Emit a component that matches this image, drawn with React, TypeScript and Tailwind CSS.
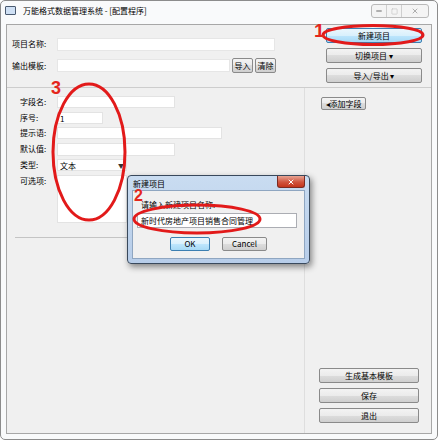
import { X, Minus, Square } from "lucide-react";

const font = "font-['Noto_Sans_CJK_SC','Noto_Sans',sans-serif]";
const btn =
  "flex items-center justify-center border border-[#8a8a8a] rounded-[2px] bg-[linear-gradient(#f3f3f3,#ebebeb_50%,#dddddd_50%,#cfcfcf)] text-[8px] leading-none text-black";
const field = "h-[12px] bg-white border border-[#e3e3e3] text-[8px] leading-[11px] px-[2px]";

function Row({ label, children }: { label: string; children: React.ReactNode }) {
  return (
    <div className="flex items-start">
      <span className="w-[37px] text-[8px] leading-[12px] text-black">{label}</span>
      {children}
    </div>
  );
}

export default function App() {
  return (
    <div className={`relative w-[438px] h-[440px] bg-white ${font}`}>
      {/* main window */}
      <div className="w-[438px] h-[440px] flex flex-col border border-[#8c8c8c] rounded-[5px] bg-[#f9fafb]">
        {/* title bar */}
        <div className="h-[23px] flex items-start shrink-0">
          <div className="mt-[5px] ml-[4px] w-[11px] h-[9px] border border-[#4a5a70] bg-[#cfe0f4] rounded-[1px]" />
          <span className="ml-[7px] mt-[4px] text-[8px] leading-[12px] text-black">
            万能格式数据管理系统 - [配置程序]
          </span>
          <div className="ml-auto mr-[8px] mt-[3px] flex h-[14px] border border-[#b9b9b9] rounded-[3px] bg-[#f4f4f4]">
            <div className="w-[15px] flex items-center justify-center border-r border-[#cfcfcf]">
              <Minus size={8} strokeWidth={3} className="text-[#6b6b6b]" />
            </div>
            <div className="w-[15px] flex items-center justify-center border-r border-[#cfcfcf]">
              <Square size={7} strokeWidth={2} className="text-[#c0c0c0]" />
            </div>
            <div className="w-[26px] flex items-center justify-center">
              <X size={8} strokeWidth={2} className="text-[#8a8a8a]" />
            </div>
          </div>
        </div>

        {/* client area */}
        <div className="mx-[5px] mb-[5px] flex-1 flex flex-col border border-[#a7a7a7] bg-[#f0f0f0]">
          {/* top section */}
          <div className="h-[63px] shrink-0 flex border-b border-[#cdcdcd]">
            <div className="flex-1 pl-[5px] pt-[12px] flex flex-col gap-[7px]">
              <div className="flex items-center h-[14px]">
                <span className="w-[45px] text-[8px] text-black">项目名称:</span>
                <div className="w-[218px] h-[13px] bg-white border border-[#e6e6e6]" />
              </div>
              <div className="flex items-center h-[15px]">
                <span className="w-[45px] text-[8px] text-black">输出模板:</span>
                <div className="w-[173px] h-[13px] bg-white border border-[#e6e6e6]" />
                <div className={`${btn} ml-[2px] w-[21px] h-[15px]`}>导入</div>
                <div className={`${btn} ml-[2px] w-[21px] h-[15px]`}>清除</div>
              </div>
            </div>
            <div className="w-[96px] mr-[9px] pt-[3px] flex flex-col gap-[5px]">
              <div className="flex items-center justify-center h-[15px] border border-[#3c7fb1] rounded-[2px] bg-[linear-gradient(#eaf6fd,#d9f0fc_50%,#bee6fd_50%,#a7d9f5)] text-[8px] leading-none">
                新建项目
              </div>
              <div className={`${btn} h-[15px]`}>切换项目 ▾</div>
              <div className={`${btn} h-[15px]`}>导入/导出 ▾</div>
            </div>
          </div>

          {/* lower section */}
          <div className="flex-1 flex">
            <div className="w-[298px] border-r border-[#dedede] flex flex-col">
              <div className="pl-[13px] pt-[8px] flex flex-col gap-[3.5px]">
                <Row label="字段名:">
                  <div className={`${field} w-[118px]`} />
                </Row>
                <Row label="序号:">
                  <div className={`${field} w-[46px]`}>1</div>
                </Row>
                <Row label="提示语:">
                  <div className={`${field} w-[165px]`} />
                </Row>
                <Row label="默认值:">
                  <div className={`${field} w-[118px] h-[13px]`} />
                </Row>
                <Row label="类型:">
                  <div className={`${field} w-[70px] flex items-center justify-between`}>
                    <span>文本</span>
                    <span className="text-[6px] text-[#333]">▼</span>
                  </div>
                </Row>
                <Row label="可选项:">
                  <div className="w-[70px] h-[48px] bg-white border border-[#e3e3e3]" />
                </Row>
              </div>
              <div className="mt-[14px] ml-[8px] mr-[5px] border-t border-[#c4c4c4]" />
            </div>

            <div className="flex-1 flex flex-col pl-[16px] pr-[12px] pt-[9px] pb-[10px]">
              <div className={`${btn} w-[45px] h-[13px]`}>◂添加字段</div>
              <div className="mt-auto flex flex-col gap-[5px] -ml-[2px]">
                <div className={`${btn} h-[15px]`}>生成基本模板</div>
                <div className={`${btn} h-[15px]`}>保存</div>
                <div className={`${btn} h-[15px]`}>退出</div>
              </div>
            </div>
          </div>
        </div>
      </div>

      {/* dialog */}
      <div className="absolute left-[127px] top-[175px] w-[183px] h-[89px] flex flex-col rounded-[4px] border border-[#39495c] bg-[linear-gradient(#c9dcf1,#b7cde9)] shadow-[2px_3px_6px_rgba(0,0,0,0.45)]">
        <div className="h-[14px] flex items-start shrink-0">
          <span className="ml-[5px] mt-[3px] text-[8px] leading-[10px] text-black">新建项目</span>
          <div className="ml-auto mr-[4px] w-[28px] h-[12px] rounded-b-[3px] border border-t-0 border-[#7a2b22] bg-[linear-gradient(#e8a493,#d0543e_55%,#c4351c)] flex items-center justify-center">
            <X size={8} strokeWidth={3} className="text-white" />
          </div>
        </div>
        <div className="mx-[4px] mb-[4px] flex-1 border border-[#8fa6c1] bg-[#f0f0f0] flex flex-col">
          <span className="ml-[8px] mt-[8px] text-[8px] leading-[11px] text-black">请输入新建项目名称:</span>
          <div className="ml-[4px] mt-[3px] w-[160px] h-[15px] bg-white border border-[#abadb3] text-[8px] leading-[13px] px-[3px]">
            新时代房地产项目销售合同管理
          </div>
          <div className="mt-[9px] flex">
            <div className="ml-[37px] w-[40px] h-[14px] flex items-center justify-center border border-[#3c7fb1] rounded-[2px] bg-[linear-gradient(#eaf6fd,#d9f0fc_50%,#bee6fd_50%,#a7d9f5)] text-[8px] leading-none">
              OK
            </div>
            <div className={`${btn} ml-[12px] w-[45px] h-[14px]`}>Cancel</div>
          </div>
        </div>
      </div>

      {/* red annotations */}
      <svg className="absolute left-0 top-0 pointer-events-none" width="438" height="440">
        <ellipse cx="373" cy="35" rx="50" ry="9.5" fill="none" stroke="#e21a1a" strokeWidth="3" />
        <ellipse cx="89" cy="152" rx="36" ry="68" fill="none" stroke="#e21a1a" strokeWidth="3" />
        <ellipse cx="197" cy="219" rx="63" ry="14" fill="none" stroke="#e21a1a" strokeWidth="3" />
      </svg>
      <span className="absolute left-[314px] top-[21px] text-[19px] leading-none font-bold text-[#e4261c] font-['Liberation_Sans',sans-serif]">
        1
      </span>
      <span className="absolute left-[51px] top-[79px] text-[18px] leading-none font-bold text-[#e4261c] font-['Liberation_Sans',sans-serif]">
        3
      </span>
      <span className="absolute left-[134px] top-[188px] text-[16px] leading-none font-bold text-[#e4261c] font-['Liberation_Sans',sans-serif]">
        2
      </span>
    </div>
  );
}
